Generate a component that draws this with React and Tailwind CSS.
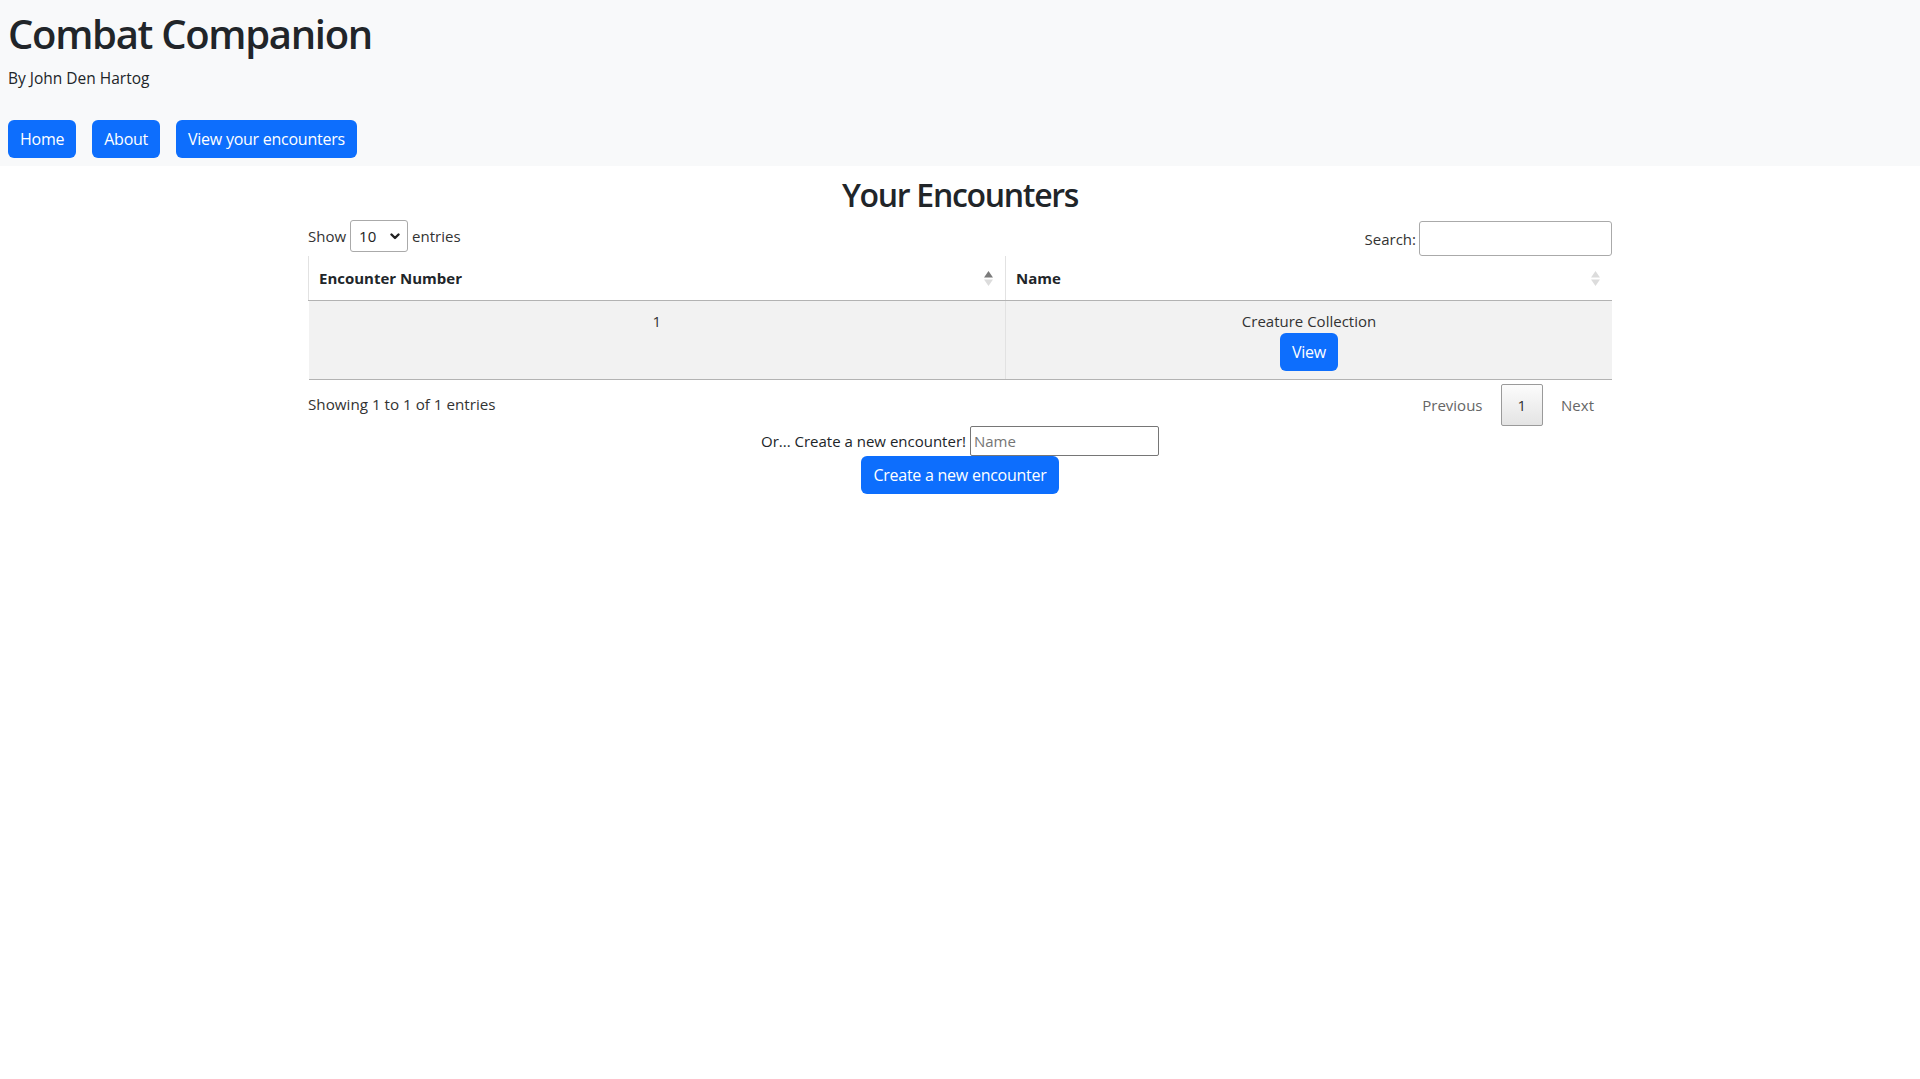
import React from "react";

function SortIcon({ asc }) {
  return (
    <svg width="9" height="15" viewBox="0 0 9 15" className="shrink-0">
      <polygon points="4.5,0 9,6.5 0,6.5" fill={asc ? "#7b7b7b" : "#dcdcdc"} />
      <polygon points="0,8.5 9,8.5 4.5,15" fill="#dcdcdc" />
    </svg>
  );
}

function Chevron() {
  return (
    <svg width="10" height="7" viewBox="0 0 10 7" className="shrink-0">
      <polyline points="1.5,1.5 5,5 8.5,1.5" fill="none" stroke="#222" strokeWidth="2.4" strokeLinecap="round" strokeLinejoin="round" />
    </svg>
  );
}

const btn = "h-[38px] px-3 rounded-[6px] bg-[#0d6efd] text-white text-base leading-6 tracking-[-0.25px]";

export default function App() {
  return (
    <div className="min-h-screen bg-white text-[#212529] font-['Open_Sans','Noto_Sans',sans-serif] text-base leading-6">
      <header className="bg-[#f8f9fa] px-2 pt-[10px] pb-2">
        <h1 className="text-[40px] font-semibold leading-[48px] mb-2 tracking-[-1.3px]">Combat Companion</h1>
        <p className="text-[15.5px] leading-6 mb-[30px]">By John Den Hartog</p>
        <nav className="flex gap-4">
          <button className={btn}>Home</button>
          <button className={btn}>About</button>
          <button className={btn}>View your encounters</button>
        </nav>
      </header>

      <main className="pt-[10px]">
        <h2 className="text-[32px] font-semibold leading-[38px] text-center mb-[6px] tracking-[-1.3px]">Your Encounters</h2>

        <div className="w-[1304px] mx-auto text-[#333]">
          <div className="flex justify-between h-[36px]">
            <div className="flex items-center h-[32px] gap-[4px] text-[15px]">
              <span>Show</span>
              <div className="w-[58px] h-[32px] border border-[#aaa] rounded-[3px] bg-white flex items-center justify-between pl-[8px] pr-[7px] text-[#222]">
                <span>10</span>
                <Chevron />
              </div>
              <span>entries</span>
            </div>
            <div className="flex items-center h-[36px] pt-[1px] text-[15px]">
              <span>Search:</span>
              <div className="ml-[3px] w-[193px] h-[35px] border border-[#aaa] rounded-[3px] bg-white"></div>
            </div>
          </div>

          <table className="w-full border-collapse text-[15px]">
            <thead>
              <tr>
                <th className="w-[697px] text-left font-bold text-[#212529] border-l border-l-[#e2e2e2] border-b border-b-[#b3b3b3] py-[10px] pl-[10px] pr-[12px]">
                  <div className="flex items-center justify-between">
                    <span>Encounter Number</span>
                    <SortIcon asc />
                  </div>
                </th>
                <th className="text-left font-bold text-[#212529] border-l border-l-[#e2e2e2] border-b border-b-[#b3b3b3] py-[10px] pl-[10px] pr-[12px]">
                  <div className="flex items-center justify-between">
                    <span>Name</span>
                    <SortIcon />
                  </div>
                </th>
              </tr>
            </thead>
            <tbody>
              <tr className="bg-[#f2f2f2]">
                <td className="align-top text-center py-[8px] px-[10px] border-b border-b-[#b3b3b3]">1</td>
                <td className="align-top text-center py-[8px] px-[10px] border-l border-l-[#e2e2e2] border-b border-b-[#b3b3b3]">
                  <div>Creature Collection</div>
                  <button className={btn}>View</button>
                </td>
              </tr>
            </tbody>
          </table>

          <div className="flex justify-between">
            <div className="pt-[12px] text-[15.2px]">Showing 1 to 1 of 1 entries</div>
            <div className="pt-[4px] flex items-center text-[15px] text-[#666]">
              <span className="px-4 h-[42px] flex items-center">Previous</span>
              <span className="ml-[2px] px-4 h-[42px] flex items-center border border-[#9a9a9a] rounded-[2px] bg-gradient-to-b from-[#fcfcfc] to-[#e4e4e4] text-[#333]">1</span>
              <span className="ml-[2px] px-4 h-[42px] flex items-center mr-[2px]">Next</span>
            </div>
          </div>
        </div>

        <div className="flex justify-center items-center gap-[4px] h-[30px] text-[15px]">
          <span>Or... Create a new encounter!</span>
          <div className="w-[189px] h-[30px] border border-[#767676] rounded-[2px] bg-white flex items-center pl-[3px] text-[#757575]">Name</div>
        </div>
        <div className="flex justify-center">
          <button className={btn}>Create a new encounter</button>
        </div>
      </main>
    </div>
  );
}
